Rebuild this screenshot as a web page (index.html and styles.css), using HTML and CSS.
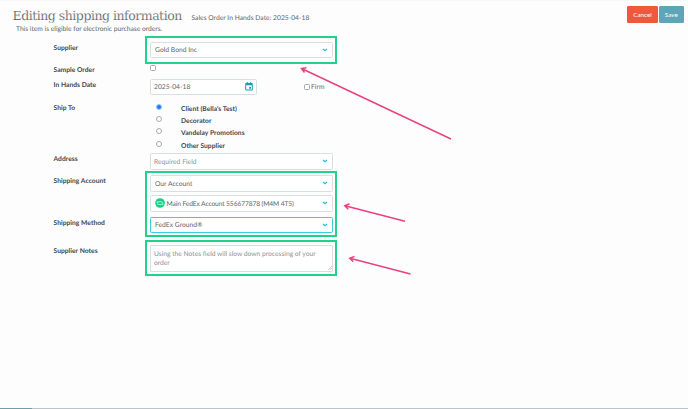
FILE: index.html
```html
<!DOCTYPE html>
<html lang="en">
<head>
  <meta charset="UTF-8" />
  <meta name="viewport" content="width=device-width, initial-scale=1.0"/>
  <title>Editing shipping information</title>
  <link rel="stylesheet" href="styles.css">
</head>
<body>
  <header class="page-header">
    <div class="heading">
      <h1>Editing shipping information</h1>
      <span class="sub">Sales Order In Hands Date: 2025-04-18</span>
    </div>
    <div class="actions">
      <button type="button" class="btn cancel">Cancel</button>
      <button type="button" class="btn save">Save</button>
    </div>
  </header>
  <p class="notice">This item is eligible for electronic purchase orders.</p>

  <form class="form">
    <div class="row supplier">
      <label>Supplier</label>
      <div class="field marked">
        <div class="select"><span>Gold Bond Inc</span><svg class="chevron" viewBox="0 0 6 4"><path d="M1 1l2 1.8L5 1"/></svg></div>
      </div>
    </div>

    <div class="row sample">
      <label>Sample Order</label>
      <div class="field"><span class="checkbox"></span></div>
    </div>

    <div class="row date">
      <label>In Hands Date</label>
      <div class="field date-field">
        <div class="select date-input">
          <span>2025-04-18</span>
          <svg class="calendar" viewBox="0 0 8 9"><path d="M1.8 0h1v1h2.4V0h1v1H7a.8.8 0 0 1 .8.8v6A.8.8 0 0 1 7 8.600H1a.8.8 0 0 1-.8-.8v-6A.8.8 0 0 1 1 1h.8zM1.200 3.200v4.400h5.600V3.200zM4.200 5h1.800v1.800H4.200z" fill-rule="evenodd"/></svg>
        </div>
        <div class="firm"><span class="checkbox"></span>Firm</div>
      </div>
    </div>

    <div class="row ship-to">
      <label>Ship To</label>
      <div class="field radios">
        <div class="option"><span class="radio checked"></span><b>Client (Bella's Test)</b></div>
        <div class="option"><span class="radio"></span><b>Decorator</b></div>
        <div class="option"><span class="radio"></span><b>Vandelay Promotions</b></div>
        <div class="option"><span class="radio"></span><b>Other Supplier</b></div>
      </div>
    </div>

    <div class="row address">
      <label>Address</label>
      <div class="field">
        <div class="select placeholder"><span>Required Field</span><svg class="chevron" viewBox="0 0 6 4"><path d="M1 1l2 1.8L5 1"/></svg></div>
      </div>
    </div>

    <div class="shipping">
      <div class="row account">
        <label>Shipping Account</label>
        <div class="field accounts">
          <div class="select"><span>Our Account</span><svg class="chevron" viewBox="0 0 6 4"><path d="M1 1l2 1.8L5 1"/></svg></div>
          <div class="select">
            <svg class="badge" viewBox="0 0 10 10"><circle cx="5" cy="5" r="4.800" fill="#12cf85"/><path d="M2 4.400q3-1.800 6 0M2 5.800q3 1.800 6 0M2.200 3.200v1.400M7.800 5.600v1.400" fill="none" stroke="#d8fbea" stroke-width=".8"/></svg>
            <span class="fedex">Main FedEx Account 556677878 (M4M 4T5)</span>
            <svg class="chevron" viewBox="0 0 6 4"><path d="M1 1l2 1.8L5 1"/></svg>
          </div>
        </div>
      </div>
      <div class="row method">
        <label>Shipping Method</label>
        <div class="field">
          <div class="select focused"><span>FedEx Ground®</span><svg class="chevron" viewBox="0 0 6 4"><path d="M1 1l2 1.8L5 1"/></svg></div>
        </div>
      </div>
    </div>

    <div class="row notes">
      <label>Supplier Notes</label>
      <div class="field marked">
        <div class="textarea">Using the Notes field will slow down processing of your<br>order
          <svg class="grip" viewBox="0 0 4 4"><path d="M0 4l4-4M2 4l2-2"/></svg>
        </div>
      </div>
    </div>
  </form>

  <!-- Arrows pointing at the highlighted fields -->
  <svg class="arrows" viewBox="0 0 688 409">
    <path d="M451 139L301.500 68.500M306.500 67.800l-5 .7 3 4"/>
    <path d="M405 221.200L345 205.800M349.500 203.800l-4.700 2 3.500 3.500"/>
    <path d="M410.500 274L350 258.300M354.500 256.400l-4.700 1.900 3.500 3.500"/>
  </svg>
  <footer class="progress"></footer>
</body>
</html>
```
FILE: styles.css
```css
* {
  box-sizing: border-box;
}
body {
  font-family: Lato, sans-serif;
  font-size: 6.7px;
  line-height: 8px;
  letter-spacing: 0.03px;
  text-rendering: geometricPrecision;
  margin: 0;
  height: 409px;
  display: flex;
  flex-direction: column;
  overflow: hidden;
  color: #606568;
  background-color: #fdfdfd;
  border-top: 1px solid #f7f8f8;
}
.page-header {
  display: flex;
  justify-content: space-between;
  height: 24px;
  padding: 5px 4.5px 0 12.5px;
}
.heading {
  display: flex;
  align-items: baseline;
  gap: 9.5px;
}
h1 {
  font-family: "DejaVu Serif", serif;
  font-size: 12.5px;
  font-weight: 400;
  line-height: 19px;
  letter-spacing: -0.48px;
  width: 169.5px;
  margin: 0;
  color: #4c5154;
  -webkit-text-stroke: 0.22px #fdfdfd;
  white-space: nowrap;
}
.sub {
  white-space: nowrap;
}
.actions {
  display: flex;
  gap: 1px;
}
.btn {
  font-family: inherit;
  font-size: 6.3px;
  height: 17px;
  padding: 0;
  border: 1px solid #f0583b;
  border-radius: 1px;
  color: #fff;
  background-color: #f0583b;
}
.cancel {
  width: 31px;
}
.save {
  width: 24.5px;
  background-color: #5da5b7;
  border-color: #5da5b7;
}
.notice {
  margin: 0 0 8.5px 16px;
  height: 8px;
  letter-spacing: 0;
  white-space: nowrap;
}
.form {
  width: 333px;
  padding-left: 53.5px;
}
.row {
  display: flex;
}
.row label {
  width: 96.5px;
  padding-top: 2px;
  font-weight: 700;
  color: #42484c;
}
.field {
  position: relative;
  width: 183px;
}
.supplier {
  height: 22.5px;
}
.sample {
  height: 14.5px;
}
.date {
  height: 23.5px;
}
.ship-to {
  height: 51px;
}
.address {
  height: 22px;
}
.account {
  height: 41.5px;
}
.method {
  height: 28.5px;
}
.select {
  display: flex;
  align-items: center;
  height: 16.5px;
  padding: 0 4px;
  border: 1px solid #d9dfe1;
  border-radius: 1.5px;
  background-color: #fff;
}
.select span {
  padding-top: 1px;
}
.select .chevron {
  width: 6px;
  height: 4px;
  margin-left: auto;
}
.chevron path {
  fill: none;
  stroke: #25bdd0;
  stroke-width: 1.2;
}
.placeholder {
  color: #8c9194;
  padding-left: 3px;
}
.focused {
  border-color: #3dcbe0;
}
.fedex {
  letter-spacing: -0.12px;
}
.date-field {
  display: flex;
  align-items: flex-start;
}
.date-input {
  width: 106.5px;
  padding: 0 3px;
}
.calendar {
  width: 8px;
  height: 9px;
  margin-left: auto;
  fill: #199fb5;
}
.firm {
  display: flex;
  align-items: center;
  gap: 1px;
  margin: 4px 0 0 47.5px;
}
.checkbox {
  width: 6px;
  height: 6px;
  border: 1px solid #a8a8a8;
  border-radius: 1.5px;
  background-color: #fff;
}
.sample .checkbox {
  display: block;
  margin-top: 1px;
}
.option {
  display: flex;
  align-items: center;
  height: 12.2px;
  padding-top: 2px;
  color: #42484c;
}
.radio {
  width: 6px;
  height: 6px;
  margin: -4px 19.5px 0 5.5px;
  border: 1px solid #aaa;
  border-radius: 50%;
  background-color: #fff;
}
.radio.checked {
  border-color: #9cc4fb;
  background-color: #1f7af5;
}
.accounts {
  display: flex;
  flex-direction: column;
  gap: 3.5px;
}
.badge {
  width: 10px;
  height: 10px;
  margin-right: 1.5px;
}
.textarea {
  position: relative;
  height: 26.5px;
  padding: 3.5px 3px;
  line-height: 9.5px;
  letter-spacing: 0;
  border: 1px solid #d9dfe1;
  border-radius: 1px;
  background-color: #fff;
  color: #8c9194;
  white-space: nowrap;
}
.grip {
  position: absolute;
  right: 0.5px;
  bottom: 0.5px;
  width: 4px;
  height: 4px;
}
.grip path {
  stroke: #999;
  stroke-width: 0.5;
}

/* green highlight frames */
.marked::after,
.shipping::after {
  content: "";
  position: absolute;
  border: 2px solid #22d28c;
  pointer-events: none;
}
.marked::after {
  inset: -5px -4px -4px -5px;
}
.supplier .marked {
  height: 17px;
}
.supplier .marked::after {
  top: -6px;
  bottom: -5px;
}
.shipping {
  position: relative;
}
.shipping::after {
  inset: -4px -4px 8.5px 91.5px;
}
.arrows {
  position: absolute;
  top: 0;
  left: 0;
  width: 688px;
  height: 409px;
  pointer-events: none;
}
.arrows path {
  fill: none;
  stroke: #e8427f;
  stroke-width: 1.5;
}
.progress {
  height: 1px;
  margin-top: auto;
  background: linear-gradient(to right, #6f9dac 32px, #bcc4c7 32px);
}
```
